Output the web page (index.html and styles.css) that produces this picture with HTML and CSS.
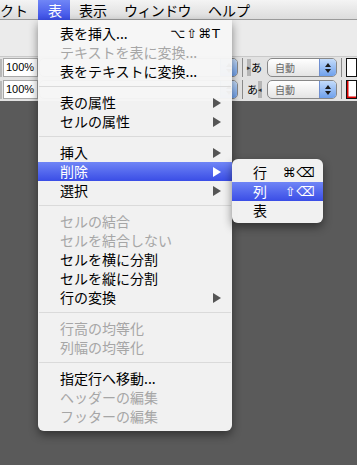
FILE: index.html
```html
<!DOCTYPE html>
<html lang="ja">
<head>
    <meta charset="UTF-8">
    <title>表メニュー</title>
    <link rel="stylesheet" href="styles.css">
</head>
<body>
    <div class="menubar">
        <span class="menu-title cut">クト</span>
        <span class="menu-title active">表</span>
        <span class="menu-title">表示</span>
        <span class="menu-title narrow">ウィンドウ</span>
        <span class="menu-title">ヘルプ</span>
    </div>

    <div class="toolbar">
        <div class="toolbar-top"></div>
        <div class="format-rows">
            <div class="format-row">
                <div class="edge"></div>
                <div class="field">100%</div>
                <div class="popup wide"><span class="stepper"><i class="up"></i><i class="down"></i></span></div>
                <div class="vsep"></div>
                <div class="dir-icon"><span class="mark">▸</span>あ</div>
                <div class="popup"><span class="popup-label">自動</span><span class="stepper"><i class="up"></i><i class="down"></i></span></div>
                <div class="vsep"></div>
                <div class="swatch"></div>
            </div>
            <div class="format-row">
                <div class="edge"></div>
                <div class="field">100%</div>
                <div class="popup wide"><span class="stepper"><i class="up"></i><i class="down"></i></span></div>
                <div class="vsep"></div>
                <div class="dir-icon">あ<span class="mark">◂</span></div>
                <div class="popup"><span class="popup-label">自動</span><span class="stepper"><i class="up"></i><i class="down"></i></span></div>
                <div class="vsep"></div>
                <div class="swatch red"></div>
            </div>
        </div>
    </div>

    <div class="workspace"></div>

    <div class="menu main-menu">
        <div class="item"><span>表を挿入...</span><span class="key">⌥⇧⌘T</span></div>
        <div class="item disabled"><span>テキストを表に変換...</span></div>
        <div class="item"><span>表をテキストに変換...</span></div>
        <div class="sep"></div>
        <div class="item"><span>表の属性</span><span class="arrow"></span></div>
        <div class="item"><span>セルの属性</span><span class="arrow"></span></div>
        <div class="sep"></div>
        <div class="item"><span>挿入</span><span class="arrow"></span></div>
        <div class="item selected"><span>削除</span><span class="arrow"></span></div>
        <div class="item"><span>選択</span><span class="arrow"></span></div>
        <div class="sep"></div>
        <div class="item disabled"><span>セルの結合</span></div>
        <div class="item disabled"><span>セルを結合しない</span></div>
        <div class="item"><span>セルを横に分割</span></div>
        <div class="item"><span>セルを縦に分割</span></div>
        <div class="item"><span>行の変換</span><span class="arrow"></span></div>
        <div class="sep"></div>
        <div class="item disabled"><span>行高の均等化</span></div>
        <div class="item disabled"><span>列幅の均等化</span></div>
        <div class="sep"></div>
        <div class="item"><span>指定行へ移動...</span></div>
        <div class="item disabled"><span>ヘッダーの編集</span></div>
        <div class="item disabled"><span>フッターの編集</span></div>
    </div>

    <div class="menu sub-menu">
        <div class="item"><span>行</span><span class="key">⌘⌫</span></div>
        <div class="item selected"><span>列</span><span class="key">⇧⌫</span></div>
        <div class="item"><span>表</span></div>
    </div>
</body>
</html>
```

FILE: styles.css
```css
body {
    margin: 0;
    width: 357px;
    height: 465px;
    overflow: hidden;
    position: relative;
    background: #5a5a5a;
    font-family: "Noto Sans CJK JP", "Liberation Sans", sans-serif;
    font-size: 14px;
    color: #000;
}
.menubar {
    height: 20px;
    display: flex;
    align-items: center;
    background: linear-gradient(#f4f4f4, #dcdcdc);
    border-bottom: 1px solid #9a9a9a;
    box-sizing: border-box;
}
.menu-title {
    height: 20px;
    line-height: 20px;
    padding: 0 8px 0 9px;
}
.menu-title.cut {
    padding: 0;
    margin-right: 10px;
}
.menu-title.narrow {
    letter-spacing: -0.6px;
}
.menu-title.active {
    padding: 0 8px 0 10px;
    background: linear-gradient(#7086f6, #3a4de6);
    color: #fff;
}
.toolbar {
    background: #e2e2e2;
}
.toolbar-top {
    height: 36px;
    background: #ebebeb;
    border-bottom: 1px solid #c9c9c9;
}
.format-rows {
    padding: 1px 0 2px;
    display: flex;
    flex-direction: column;
    gap: 3px;
}
.format-row {
    display: flex;
    align-items: center;
    height: 19px;
}
.edge {
    width: 2px;
    height: 18px;
    background: #b8b8b8;
    margin-right: 1px;
}
.field {
    width: 32px;
    height: 17px;
    background: #fff;
    border: 1px solid #a8a8a8;
    font-family: "Liberation Sans", sans-serif;
    font-size: 11px;
    line-height: 17px;
    padding-left: 2px;
}
.popup {
    width: 70px;
    height: 17px;
    margin-left: 5px;
    border: 1px solid #888;
    border-radius: 5px;
    background: linear-gradient(#ffffff, #e4e4e4);
    display: flex;
    align-items: center;
    justify-content: space-between;
    overflow: hidden;
}
.popup.wide {
    width: 202px;
    margin-left: 1px;
    justify-content: flex-end;
}
.popup-label {
    font-size: 10px;
    color: #666;
    padding-left: 7px;
}
.stepper {
    width: 16px;
    height: 17px;
    background: linear-gradient(#c4dcfa, #6ea0ec);
    border-left: 1px solid #6f8fd0;
    display: flex;
    flex-direction: column;
    align-items: center;
    justify-content: center;
    gap: 2px;
}
.stepper i {
    width: 0;
    height: 0;
    border-left: 3px solid transparent;
    border-right: 3px solid transparent;
}
.stepper .up { border-bottom: 4px solid #1a1a1a; }
.stepper .down { border-top: 4px solid #1a1a1a; }
.vsep {
    width: 1px;
    height: 19px;
    background: #8a8a8a;
    margin: 0 4px;
}
.dir-icon {
    width: 15px;
    height: 17px;
    font-size: 11px;
    line-height: 17px;
    display: flex;
    align-items: center;
}
.dir-icon .mark {
    background: #b5b5b5;
    width: 5px;
    font-size: 7px;
    height: 17px;
    line-height: 17px;
    text-align: center;
    color: #333;
}
.swatch {
    width: 9px;
    height: 17px;
    background: #fff;
    border: 1px solid #111;
}
.swatch.red {
    box-shadow: inset 2px -2px 0 -0.5px #d00;
}
.menu {
    position: absolute;
    background: rgba(246, 246, 246, 0.97);
    box-shadow: 0 4px 10px rgba(0, 0, 0, 0.45);
}
.main-menu {
    left: 38px;
    top: 20px;
    width: 194px;
    padding: 4px 0 5px;
    border-radius: 0 0 6px 6px;
}
.sub-menu {
    left: 232px;
    top: 159px;
    width: 91px;
    padding: 4px 0 3px;
    border-radius: 6px;
}
.item {
    height: 19px;
    line-height: 19px;
    display: flex;
    align-items: center;
    justify-content: space-between;
    padding: 0 11px 0 22px;
    white-space: nowrap;
}
.sub-menu .item {
    padding: 0 7px 0 21px;
}
.item.disabled {
    color: #a6a6a6;
}
.item.selected {
    background: linear-gradient(#6f85f6, #3a4de6);
    color: #fff;
}
.key {
    font-family: "DejaVu Sans", sans-serif;
    font-size: 13px;
    letter-spacing: 1px;
}
.arrow {
    width: 0;
    height: 0;
    border-top: 5px solid transparent;
    border-bottom: 5px solid transparent;
    border-left: 8px solid #555;
}
.selected .arrow {
    border-left-color: #fff;
}
.sep {
    height: 1px;
    background: #dadada;
    margin: 5px 1px 6px;
}
```
